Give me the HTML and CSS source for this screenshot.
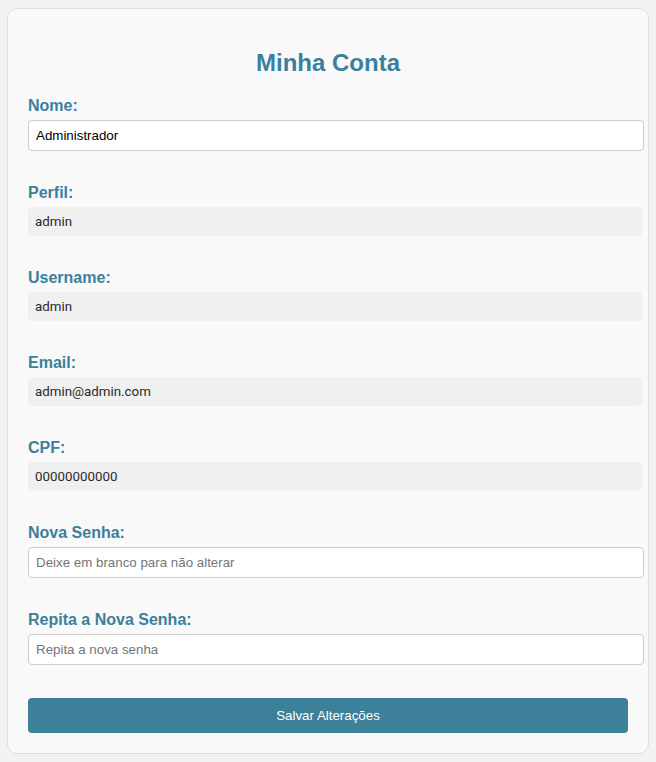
FILE: index.html
```html
<!DOCTYPE html>
<html lang="pt-BR">
<head>
<meta charset="utf-8">
<title>Minha Conta</title>
<link rel="stylesheet" href="styles.css">
</head>
<body>
<div class="card">
  <h2 class="title">Minha Conta</h2>
  <form class="form">
    <div class="group">
      <label class="label" for="nome">Nome:</label>
      <input class="field" id="nome" type="text" value="Administrador">
    </div>
    <div class="group">
      <label class="label">Perfil:</label>
      <div class="static">admin</div>
    </div>
    <div class="group">
      <label class="label">Username:</label>
      <div class="static">admin</div>
    </div>
    <div class="group">
      <label class="label">Email:</label>
      <div class="static">admin@admin.com</div>
    </div>
    <div class="group">
      <label class="label">CPF:</label>
      <div class="static">00000000000</div>
    </div>
    <div class="group">
      <label class="label" for="senha">Nova Senha:</label>
      <input class="field" id="senha" type="password" placeholder="Deixe em branco para não alterar">
    </div>
    <div class="group">
      <label class="label" for="senha2">Repita a Nova Senha:</label>
      <input class="field" id="senha2" type="password" placeholder="Repita a nova senha">
    </div>
    <button class="submit" type="button">Salvar Alterações</button>
  </form>
</div>
</body>
</html>
```
FILE: styles.css
```css
html, body {
  margin: 0;
  padding: 0;
}
body {
  background: #f2f2f2;
  font-family: "Liberation Sans", Arial, sans-serif;
  padding-top: 8px;
}
.card {
  width: 600px;
  margin: 0 auto;
  padding: 20px;
  background: #f9f9f9;
  border: 1px solid #dddddd;
  border-radius: 10px;
}
.title {
  margin: 20px 0;
  font-size: 24px;
  font-weight: bold;
  text-align: center;
  color: #3a809d;
  line-height: 28px;
}
.form {
  margin: 0;
}
.group {
  margin-bottom: 33px;
}
.label {
  display: block;
  font-size: 16px;
  line-height: 18px;
  font-weight: bold;
  color: #3a809d;
  margin-bottom: 5px;
}
.field {
  display: block;
  width: 100%;
  padding: 7px;
  border: 1px solid #cccccc;
  border-radius: 4px;
  background: #ffffff;
  font-family: "Liberation Sans", Arial, sans-serif;
  font-size: 13.333px;
  line-height: 15px;
  height: 15px;
  color: #000000;
  outline: none;
}
.field::placeholder {
  color: #757575;
}
.static {
  width: 100%;
  padding: 7px;
  background: #f0f0f0;
  border-radius: 4px;
  font-family: Roboto, "Liberation Sans", sans-serif;
  font-size: 13.333px;
  line-height: 15px;
  color: #2a2a2a;
}
.submit {
  display: block;
  width: 100%;
  height: 35px;
  padding: 0;
  border: none;
  border-radius: 4px;
  background: #3d8099;
  color: #ffffff;
  font-family: "Liberation Sans", Arial, sans-serif;
  font-size: 13.333px;
  cursor: pointer;
}
```
